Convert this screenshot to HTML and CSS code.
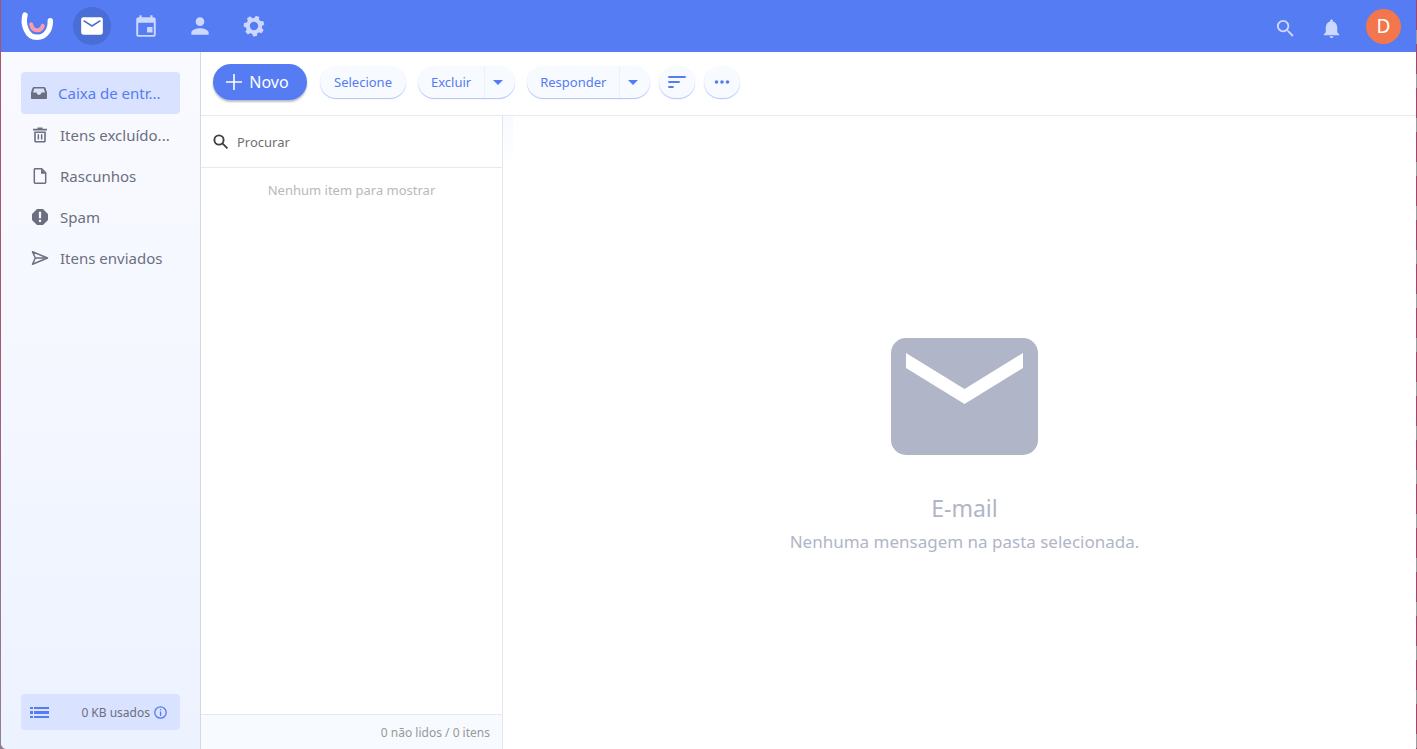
FILE: index.html
```html
<!DOCTYPE html>
<html lang="pt-BR">
<head>
<meta charset="utf-8">
<title>E-mail</title>
<link rel="stylesheet" href="styles.css">
</head>
<body>
<div class="app">
  <header class="topbar">
    <a class="logo" href="#" aria-label="Início">
      <svg width="36" height="32" viewBox="0 0 36 32">
        <path class="logo-ring" d="M5 5C2.600 14 6.500 27.300 17 27.300c9 0 13.600-8 13.300-16.500"/>
        <path class="logo-smile" d="M11.200 14.200c1.200 7.600 9.500 7.800 11.600 1.600"/>
      </svg>
    </a>
    <nav class="apps" aria-label="Aplicativos">
      <button class="app-btn active" aria-label="E-mail"><svg width="26" height="26" viewBox="0 0 24 24"><path d="M20 4H4c-1.100 0-2 .9-2 2v12c0 1.100.9 2 2 2h16c1.100 0 2-.9 2-2V6c0-1.100-.9-2-2-2z"/><path class="flap" d="M4.200 7L12 12l7.800-5"/></svg></button>
      <button class="app-btn" aria-label="Calendário"><svg width="26" height="26" viewBox="0 0 24 24"><path d="M18 13h-5v5h5v-5zM16 2v2H8V2H6v2H5c-1.110 0-2 .9-2 2v14c0 1.100.89 2 2 2h14c1.100 0 2-.9 2-2V6c0-1.100-.9-2-2-2h-1V2h-2zm3.200 18.200H4.800V9h14.400v11.200z"/></svg></button>
      <button class="app-btn" aria-label="Contatos"><svg width="26" height="26" viewBox="0 0 24 24"><path d="M12 12c2.210 0 4-1.790 4-4s-1.790-4-4-4-4 1.790-4 4 1.790 4 4 4zm0 2c-2.670 0-8 1.340-8 4v2h16v-2c0-2.660-5.330-4-8-4z"/></svg></button>
      <button class="app-btn" aria-label="Configurações"><svg width="26" height="26" viewBox="-12 -12 24 24"><g transform="rotate(20)"><path id="t" d="M-2.600-6-1.700-9.500H1.700L2.600-6z"/><use href="#t" transform="rotate(51.430)"/><use href="#t" transform="rotate(102.860)"/><use href="#t" transform="rotate(154.290)"/><use href="#t" transform="rotate(205.710)"/><use href="#t" transform="rotate(257.140)"/><use href="#t" transform="rotate(308.570)"/></g><circle class="gear-ring" r="5.700"/></svg></button>
    </nav>
    <div class="top-actions">
      <button class="top-btn" aria-label="Pesquisar"><svg width="23" height="23" viewBox="0 0 24 24"><path d="M15.500 14h-.79l-.28-.27A6.471 6.471 0 0 0 16 9.500 6.500 6.500 0 1 0 9.500 16c1.610 0 3.090-.59 4.230-1.570l.27.28v.79l5 4.990L20.490 19l-4.990-5zm-6 0C7.010 14 5 11.990 5 9.500S7.010 5 9.500 5 14 7.010 14 9.500 11.990 14 9.500 14z"/></svg></button>
      <button class="top-btn" aria-label="Notificações"><svg width="23" height="23" viewBox="0 0 24 24"><path d="M12 22c1.100 0 2-.9 2-2h-4c0 1.100.89 2 2 2zm6-6v-5c0-3.070-1.640-5.640-4.500-6.320V4c0-.83-.67-1.500-1.500-1.500s-1.500.67-1.500 1.500v.68C7.630 5.360 6 7.920 6 11v5l-2 2v1h16v-1l-2-2z"/></svg></button>
      <button class="avatar" aria-label="Conta">D</button>
    </div>
  </header>

  <div class="body">
    <aside class="sidebar">
      <nav class="folders" aria-label="Pastas">
        <a class="folder selected" href="#"><svg width="18" height="18" viewBox="0 0 18 18"><path fill-rule="evenodd" d="M4 3h10c.7 0 1.200.4 1.500 1L17 8.500V14c0 .6-.4 1-1 1H2c-.6 0-1-.4-1-1V8.500L2.500 4C2.800 3.400 3.300 3 4 3zm.3 1.500L3 8.500h3.500C6.800 10 7.800 10.800 9 10.800s2.200-.8 2.500-2.300H15l-1.300-4z"/></svg><span>Caixa de entr...</span></a>
        <a class="folder" href="#"><svg width="18" height="18" viewBox="0 0 18 18"><path fill-rule="evenodd" d="M6.500 1.500h5v1.300H16v1.600H2V2.800h4.500zM3.200 5.500h11.600V15c0 .8-.6 1.500-1.500 1.500H4.700c-.9 0-1.500-.7-1.500-1.500zM4.800 7v8h8.400V7zM6.600 8.300h1.500v5.200H6.600zm3.300 0h1.500v5.200H9.900z"/></svg><span>Itens excluído...</span></a>
        <a class="folder" href="#"><svg width="18" height="18" viewBox="0 0 18 18"><path class="line" d="M3.800 1.800h6.900l4 4v9.400c0 .6-.4 1-1 1H4.300c-.6 0-1-.4-1-1V2.800c0-.6.2-1 .5-1z"/><path d="M10 1.800v5h5z"/></svg><span>Rascunhos</span></a>
        <a class="folder" href="#"><svg width="18" height="18" viewBox="0 0 18 18"><path fill-rule="evenodd" d="M6 1h6l5 5v6l-5 5H6l-5-5V6zM7.900 3.800v6.400h2.200V3.800zm0 8v2.200h2.200v-2.200z"/></svg><span>Spam</span></a>
        <a class="folder" href="#"><svg width="18" height="18" viewBox="0 0 18 18"><path class="line" d="M1.500 2.700L16.500 9l-15 6.300L4.300 9zM4.300 9h9"/></svg><span>Itens enviados</span></a>
      </nav>
      <div class="quota">
        <button class="list-btn" aria-label="Lista de pastas"><svg width="19" height="11" viewBox="0 0 19 11"><path d="M0 0h3v2H0zm4 0h15v2H4zM0 4h3v3H0zm4 0h15v3H4zM0 9h3v2H0zm4 0h15v2H4z"/></svg></button>
        <span class="quota-text">0 KB usados</span>
        <svg class="info" width="13" height="13" viewBox="0 0 13 13"><circle class="info-ring" cx="6.500" cy="6.500" r="5.700"/><path d="M5.900 5.500h1.300V10H5.900zM5.900 3h1.300v1.300H5.900z"/></svg>
      </div>
    </aside>

    <main class="main">
      <div class="toolbar">
        <button class="new-btn"><svg width="16" height="16" viewBox="0 0 16 16"><path d="M8 0v16M0 8h16" stroke="currentColor" stroke-width="1.600"/></svg>Novo</button>
        <button class="pill single">Selecione</button>
        <div class="pill split"><button class="text">Excluir</button><button class="caret" aria-label="Mais opções de exclusão"><svg width="10" height="5" viewBox="0 0 10 5"><path d="M0 0h10L5 5z"/></svg></button></div>
        <div class="pill split"><button class="text">Responder</button><button class="caret" aria-label="Mais opções de resposta"><svg width="10" height="5" viewBox="0 0 10 5"><path d="M0 0h10L5 5z"/></svg></button></div>
        <button class="pill round" aria-label="Ordenar"><svg width="18" height="12" viewBox="0 0 18 12"><path d="M1 1h16M1 6h10M1 11h4" stroke="currentColor" stroke-width="1.800" stroke-linecap="round"/></svg></button>
        <button class="pill round" aria-label="Mais"><svg width="16" height="4" viewBox="0 0 16 4"><circle cx="2.500" cy="2" r="1.800"/><circle cx="8" cy="2" r="1.800"/><circle cx="13.500" cy="2" r="1.800"/></svg></button>
      </div>
      <div class="panes">
        <section class="list">
          <label class="search"><svg width="16" height="16" viewBox="0 0 16 16"><circle class="lens" cx="6" cy="6" r="4.600"/><path class="lens" d="M9.400 9.400l5 5"/></svg><input type="text" placeholder="Procurar" aria-label="Procurar"></label>
          <p class="empty">Nenhum item para mostrar</p>
          <div class="status">0 não lidos / 0 itens</div>
        </section>
        <section class="preview">
          <svg width="147" height="117" viewBox="0 0 147 117"><path fill-rule="evenodd" d="M15 0h117a15 15 0 0 1 15 15v87a15 15 0 0 1-15 15H15a15 15 0 0 1-15-15V15A15 15 0 0 1 15 0zm0 15v15l58.500 36L132 30V15L73.500 51z"/></svg>
          <h1>E-mail</h1>
          <p>Nenhuma mensagem na pasta selecionada.</p>
        </section>
      </div>
    </main>
  </div>
</div>
</body>
</html>
```
FILE: styles.css
```css
* { box-sizing: border-box; }

body {
  margin: 0;
  padding: 0 1px;
  background:
    linear-gradient(#a8566b, #a8566b 300px, #8c8294) no-repeat 0 0 / 10px 100%,
    repeating-linear-gradient(#a04468 0 30px, #a09aa0 30px 44px);
  font-family: "Noto Sans", "Open Sans", sans-serif;
  font-size: 14px;
  color: #6b6f80;
}

button {
  margin: 0;
  padding: 0;
  border: 0;
  background: none;
  color: inherit;
  font: inherit;
  cursor: pointer;
}

a { color: inherit; text-decoration: none; }
svg { display: block; flex: none; fill: currentColor; }

.app {
  display: flex;
  flex-direction: column;
  height: 100vh;
  overflow: hidden;
  background: #fff;
  border-bottom-left-radius: 6px;
}

.topbar {
  display: flex;
  align-items: center;
  flex: none;
  height: 52px;
  padding: 0 15px 0 19px;
  background: #557cf3;
  color: #ccd8ff;
}

.logo { margin-right: 17px; }
.logo-ring { fill: none; stroke: #fff; stroke-width: 5.4; stroke-linecap: round; }
.logo-smile { fill: none; stroke: #ff9aa8; stroke-width: 4; stroke-linecap: round; }
.apps { display: flex; gap: 16px; }

.app-btn {
  display: grid;
  place-items: center;
  width: 38px;
  height: 38px;
  border-radius: 50%;
}

.app-btn.active { background: #4a6dd6; color: #fff; }
.flap { fill: none; stroke: #4a6dd6; stroke-width: 1.5; }
.gear-ring { fill: none; stroke: currentColor; stroke-width: 3.6; }

.top-actions {
  display: flex;
  align-items: center;
  gap: 23px;
  margin-left: auto;
}

.top-btn { padding-top: 5px; }

.avatar {
  width: 35px;
  height: 35px;
  border-radius: 50%;
  background: #f4764c;
  color: #fff;
  font-size: 19px;
}

.body { display: flex; flex: 1; min-height: 0; }

.sidebar {
  display: flex;
  flex-direction: column;
  justify-content: space-between;
  flex: none;
  width: 200px;
  padding: 20px 20px 19px;
  border-right: 1px solid #d5d8e4;
  background: linear-gradient(#f9faff, #f4f7ff 50%, #edf2ff);
}

.folders { display: flex; flex-direction: column; }

.folder {
  display: flex;
  align-items: center;
  gap: 11px;
  height: 41px;
  padding: 0 0 0 10px;
  border-radius: 4px;
  font-size: 15px;
  white-space: nowrap;
}

.folder.selected { height: 42px; gap: 10px; padding-left: 9px; background: #d9e2ff; }
.folder.selected span { color: #557cf3; }
.line { fill: none; stroke: currentColor; stroke-width: 1.5; stroke-linejoin: round; }

.quota {
  display: flex;
  align-items: center;
  height: 36px;
  padding: 0 13px 0 9px;
  border-radius: 4px;
  background: #d9e2ff;
  font-size: 12px;
}

.list-btn, .info { color: #557cf3; }
.info-ring { fill: none; stroke: currentColor; stroke-width: 1.3; }
.quota-text { margin-left: auto; margin-right: 4px; }

.main { display: flex; flex-direction: column; flex: 1; min-width: 0; }

.toolbar {
  display: flex;
  align-items: center;
  flex: none;
  height: 64px;
  padding: 0 12px 3px;
  border-bottom: 1px solid #e8e9ed;
  color: #557cf3;
}

.new-btn {
  display: flex;
  align-items: center;
  justify-content: center;
  gap: 7px;
  width: 94px;
  height: 36px;
  margin-right: 13px;
  padding-right: 5px;
  border-radius: 18px;
  background: #557cf3;
  box-shadow: 0 2px 2px #b9bdcc;
  color: #fff;
  font-size: 16px;
}

.pill {
  height: 32px;
  margin-right: 12px;
  border-radius: 16px;
  background: #f7faff;
  box-shadow: 0 1px 1px #b0c2fb;
  font-size: 13px;
}

.single { padding: 0 14px; }
.text { padding: 0 13px; }
.split { display: flex; }
.split + .round { margin-left: -3px; }
.round { display: grid; place-items: center; width: 36px; margin-right: 9px; }

.caret {
  display: grid;
  place-items: center;
  width: 31px;
  padding-right: 5px;
  border-left: 1px solid #edf1fb;
}

.panes { display: flex; flex: 1; min-height: 0; }

.list {
  display: flex;
  flex-direction: column;
  flex: none;
  width: 302px;
  border-right: 1px solid #e4e7f2;
}

.search {
  display: flex;
  align-items: center;
  gap: 8px;
  height: 52px;
  padding: 0 12px;
  border-bottom: 1px solid #e8e9f0;
  color: #404040;
}

.lens { fill: none; stroke: currentColor; stroke-width: 1.9; }

.search input {
  flex: 1;
  min-width: 0;
  padding: 0;
  border: 0;
  outline: 0;
  background: none;
  color: #666;
  font: inherit;
  font-size: 13px;
}

.search input::placeholder { color: #707070; opacity: 1; }

.empty {
  flex: 1;
  margin: 0;
  padding-top: 12px;
  color: #b8b8b8;
  font-size: 13px;
  line-height: 20px;
  text-align: center;
}

.status {
  height: 35px;
  padding: 0 12px;
  border-top: 1px solid #e8e9f0;
  background: #f7faff;
  color: #999;
  font-size: 12px;
  line-height: 36px;
  text-align: right;
}

.preview {
  display: flex;
  flex-direction: column;
  align-items: center;
  justify-content: center;
  flex: 1;
  min-width: 0;
  padding: 32px 0 0 10px;
  background: linear-gradient(#f7faff, #fff) no-repeat 0 0 / 10px 50px;
  color: #b0b5c7;
}

.preview h1 {
  margin: 36px 0 0;
  font-size: 23px;
  font-weight: 400;
  line-height: 34px;
}

.preview p { margin: 0; font-size: 17px; line-height: 34px; }
```
